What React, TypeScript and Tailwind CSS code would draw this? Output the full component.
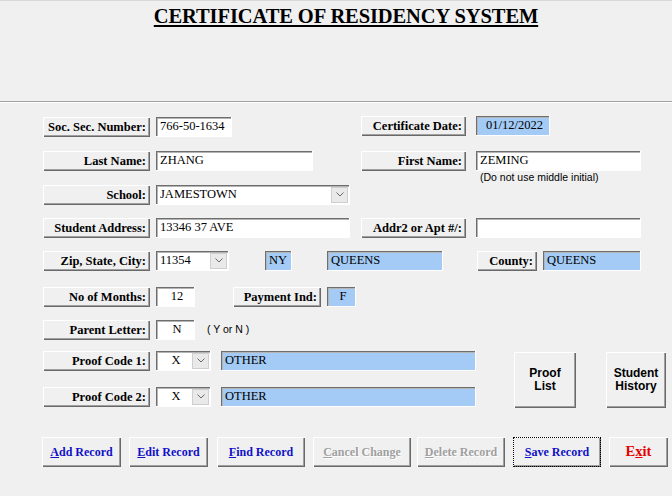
import type { ReactNode } from "react";

const raised =
  "bg-[#f0f0f0] shadow-[inset_1px_1px_0_#ffffff,inset_-1px_-1px_0_#696969,inset_-2px_-2px_0_#a0a0a0]";
const sunken =
  "border-r border-b border-r-white border-b-white shadow-[inset_1px_1px_0_#6e6e6e,inset_2px_2px_0_#b4b4b4]";

const Label = ({ w, children }: { w: string; children: ReactNode }) => (
  <div
    className={`${w} ${raised} h-[20px] shrink-0 flex items-center justify-end pr-[4px] font-bold text-[12.5px] text-black whitespace-nowrap`}
  >
    {children}
  </div>
);

const Chevron = () => (
  <div className="w-[17px] h-[16px] mr-[1px] shrink-0 flex items-center justify-center bg-[#e9e9e9] border border-[#cfcfcf]">
    <svg width="8" height="5" viewBox="0 0 8 5">
      <path d="M0.5 0.5 L4 4 L7.5 0.5" fill="none" stroke="#6a6a6a" strokeWidth="1" />
    </svg>
  </div>
);

const Field = ({
  w,
  value,
  blue,
  center,
  select,
}: {
  w: string;
  value?: string;
  blue?: boolean;
  center?: boolean;
  select?: boolean;
}) => (
  <div
    className={`${w} ${sunken} ${blue ? "bg-[#a3cbf5]" : "bg-white"} h-[20px] shrink-0 flex items-center text-[12.5px] text-black`}
  >
    <span className={`flex-1 pl-[4px] whitespace-nowrap ${center ? "text-center" : ""}`}>{value}</span>
    {select && <Chevron />}
  </div>
);

const ActionButton = ({
  w,
  ml,
  children,
  disabled,
  focused,
  red,
}: {
  w: string;
  ml: string;
  children: ReactNode;
  disabled?: boolean;
  focused?: boolean;
  red?: boolean;
}) => (
  <div
    className={`${w} ${ml} ${raised} h-[30px] shrink-0 flex items-center justify-center font-bold whitespace-nowrap ${
      disabled
        ? "text-[12px] text-[#a0a0a0] [text-shadow:1px_1px_0_#ffffff]"
        : red
        ? "text-[14.5px] text-[#e60000]"
        : "text-[12px] text-[#1010c8]"
    } ${focused ? "outline outline-1 outline-dotted outline-black -outline-offset-1" : ""}`}
  >
    {children}
  </div>
);

const BigButton = ({ w, ml, lines }: { w: string; ml: string; lines: string[] }) => (
  <div
    className={`${w} ${ml} ${raised} h-[56px] mt-[1px] shrink-0 flex flex-col items-center justify-center font-['Liberation_Sans',sans-serif] font-bold text-[12px] leading-[13px] text-black`}
  >
    {lines.map((l) => (
      <span key={l}>{l}</span>
    ))}
  </div>
);

export default function App() {
  return (
    <div className="w-[672px] h-[496px] overflow-hidden bg-[#f0f0f0] font-['Liberation_Serif',serif] border-t border-[#d8d8d8]">
      {/* title */}
      <div className="h-[100px] flex justify-center pl-[20px] pt-[3px]">
        <h1 className="text-[20.5px] leading-[24px] font-bold text-black underline decoration-2 underline-offset-[2px] tracking-[-0.1px]">
          CERTIFICATE OF RESIDENCY SYSTEM
        </h1>
      </div>
      <div className="h-px bg-[#a0a0a0]" />
      <div className="h-px bg-white" />

      <div className="pl-[43px] pt-[14px] flex flex-col">
        {/* row 1 */}
        <div className="flex items-start">
          <Label w="w-[107px]">Soc. Sec. Number:</Label>
          <div className="ml-[6px]">
            <Field w="w-[76px]" value="766-50-1634" />
          </div>
          <div className="ml-[129px] -mt-px">
            <Label w="w-[105px]">Certificate Date:</Label>
          </div>
          <div className="ml-[10px] -mt-px">
            <Field w="w-[74px]" value="01/12/2022" blue center />
          </div>
        </div>

        {/* row 2 */}
        <div className="flex items-start mt-[14px] h-[34px]">
          <Label w="w-[107px]">Last Name:</Label>
          <div className="ml-[6px]">
            <Field w="w-[157px]" value="ZHANG" />
          </div>
          <div className="ml-[48px]">
            <Label w="w-[105px]">First Name:</Label>
          </div>
          <div className="ml-[10px] flex flex-col">
            <Field w="w-[165px]" value="ZEMING" />
            <span className="pl-[4px] font-['Liberation_Sans',sans-serif] text-[10.5px] leading-[13px] text-black">
              (Do not use middle initial)
            </span>
          </div>
        </div>

        {/* row 3 */}
        <div className="flex items-start">
          <Label w="w-[107px]">School:</Label>
          <div className="ml-[6px]">
            <Field w="w-[194px]" value="JAMESTOWN" select />
          </div>
        </div>

        {/* row 4 */}
        <div className="flex items-start mt-[13px]">
          <Label w="w-[107px]">Student Address:</Label>
          <div className="ml-[6px]">
            <Field w="w-[194px]" value="13346 37 AVE" />
          </div>
          <div className="ml-[11px]">
            <Label w="w-[105px]">Addr2 or Apt #/:</Label>
          </div>
          <div className="ml-[10px]">
            <Field w="w-[165px]" />
          </div>
        </div>

        {/* row 5 */}
        <div className="flex items-start mt-[13px]">
          <Label w="w-[107px]">Zip, State, City:</Label>
          <div className="ml-[6px]">
            <Field w="w-[73px]" value="11354" select />
          </div>
          <div className="ml-[36px]">
            <Field w="w-[27px]" value="NY" blue />
          </div>
          <div className="ml-[35px]">
            <Field w="w-[116px]" value="QUEENS" blue />
          </div>
          <div className="ml-[34px]">
            <Label w="w-[60px]">County:</Label>
          </div>
          <div className="ml-[6px]">
            <Field w="w-[98px]" value="QUEENS" blue />
          </div>
        </div>

        {/* row 6 */}
        <div className="flex items-start mt-[16px]">
          <Label w="w-[107px]">No of Months:</Label>
          <div className="ml-[6px]">
            <Field w="w-[39px]" value="12" center />
          </div>
          <div className="ml-[38px]">
            <Label w="w-[88px]">Payment Ind:</Label>
          </div>
          <div className="ml-[6px]">
            <Field w="w-[29px]" value="F" blue center />
          </div>
        </div>

        {/* row 7 */}
        <div className="flex items-center mt-[13px]">
          <Label w="w-[107px]">Parent Letter:</Label>
          <div className="ml-[6px]">
            <Field w="w-[39px]" value="N" center />
          </div>
          <span className="ml-[12px] font-['Liberation_Sans',sans-serif] text-[10.5px] text-black">( Y or N )</span>
        </div>

        {/* rows 8-9 with proof buttons */}
        <div className="flex items-start mt-[11px]">
          <div className="flex flex-col gap-[16px]">
            {["Proof Code 1:", "Proof Code 2:"].map((t) => (
              <div key={t} className="flex items-start">
                <Label w="w-[107px]">{t}</Label>
                <div className="ml-[6px]">
                  <Field w="w-[55px]" value="X" center select />
                </div>
                <div className="ml-[10px]">
                  <Field w="w-[255px]" value="OTHER" blue />
                </div>
              </div>
            ))}
          </div>
          <BigButton w="w-[62px]" ml="ml-[38px]" lines={["Proof", "List"]} />
          <BigButton w="w-[60px]" ml="ml-[30px]" lines={["Student", "History"]} />
        </div>

        {/* action buttons */}
        <div className="flex items-start mt-[29px] -ml-px">
          <ActionButton w="w-[79px]" ml="ml-0">
            <span className="underline">A</span>dd Record
          </ActionButton>
          <ActionButton w="w-[79px]" ml="ml-[8px]">
            <span className="underline">E</span>dit Record
          </ActionButton>
          <ActionButton w="w-[88px]" ml="ml-[9px]">
            <span className="underline">F</span>ind Record
          </ActionButton>
          <ActionButton w="w-[98px]" ml="ml-[8px]" disabled>
            <span className="underline">C</span>ancel Change
          </ActionButton>
          <ActionButton w="w-[88px]" ml="ml-[6px]" disabled>
            <span className="underline">D</span>elete Record
          </ActionButton>
          <ActionButton w="w-[88px]" ml="ml-[8px]" focused>
            <span className="underline">S</span>ave Record
          </ActionButton>
          <ActionButton w="w-[59px]" ml="ml-[8px]" red>
            E<span className="underline">x</span>it
          </ActionButton>
        </div>
      </div>
    </div>
  );
}
